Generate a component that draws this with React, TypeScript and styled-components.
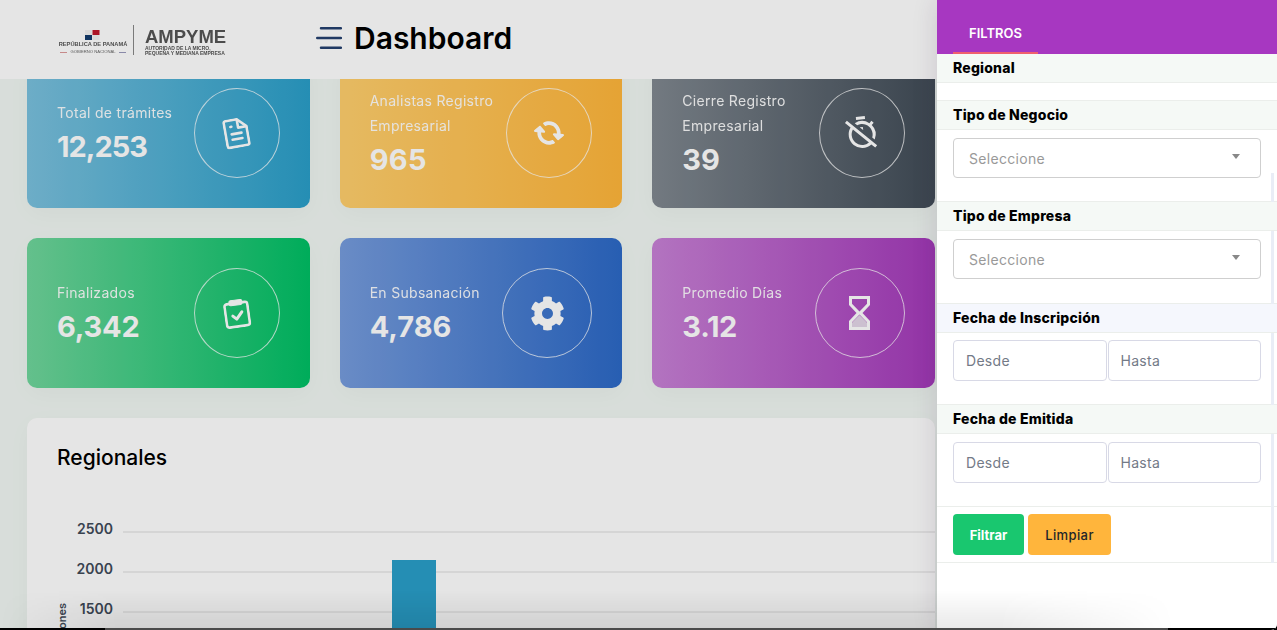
import React from "react";
import styled, { createGlobalStyle } from "styled-components";
import { FaCog, FaSyncAlt } from "react-icons/fa";
import { MdOutlineTimerOff } from "react-icons/md";

const Global = createGlobalStyle`
  html, body { margin: 0; padding: 0; height: 630px; overflow: hidden; background: #000; }
  * { box-sizing: border-box; }
  body { font-family: Inter, "Noto Sans", sans-serif; }
`;

const Page = styled.div`
  position: relative;
  width: 1277px;
  height: 630px;
  overflow: hidden;
  border-bottom-right-radius: 6px;
  background: #f1f7f3;
`;

const Header = styled.header`
  position: relative;
  z-index: 2;
  display: flex;
  align-items: center;
  height: 79px;
  padding: 0 0 3px 59px;
  background: #fff;
`;

const Logo = styled.div`
  flex: none;
  display: flex;
  align-items: center;
  width: 257px;
  margin-top: 3px;
  filter: blur(0.45px);
`;

const LogoLeft = styled.div`
  flex: none;
  display: flex;
  flex-direction: column;
  align-items: center;
  width: 68px;
  margin-top: 6px;
`;

const LogoState = styled.span`
  font: 700 5.7px/7px "Liberation Sans", sans-serif;
  color: #555;
  white-space: nowrap;
`;

const LogoGov = styled.span`
  display: flex;
  align-items: center;
  gap: 3px;
  margin-top: 1px;
  font: 400 4.2px/6px "Liberation Sans", sans-serif;
  color: #666;
  white-space: nowrap;
`;

const LogoDash = styled.i<{ $c: string }>`
  width: 7px;
  height: 1px;
  background: ${(p) => p.$c};
`;

const LogoDivider = styled.div`
  flex: none;
  width: 1px;
  height: 30px;
  margin: 0 11px 0 6px;
  background: #888;
`;

const LogoRight = styled.div`
  display: flex;
  flex-direction: column;
  align-items: flex-start;
  margin-top: 4px;
`;

const LogoName = styled.span`
  font: 700 18.5px/19px "Liberation Sans", sans-serif;
  color: #555;
`;

const LogoSub = styled.span`
  font: 700 5px/5.500px "Liberation Sans", sans-serif;
  color: #555;
  white-space: nowrap;
`;

const Burger = styled.svg`
  flex: none;
  width: 26px;
  height: 22px;
  margin-right: 12px;
  color: #24406f;
`;

const PageTitle = styled.h1`
  margin: 0;
  font: 600 30px/36px Inter, sans-serif;
  color: #000;
`;

const Content = styled.main`
  display: flex;
  flex-direction: column;
  gap: 30px;
  margin-top: -21px;
  padding: 0 342px 0 27px;
`;

const CardGrid = styled.section`
  display: grid;
  grid-template-columns: repeat(3, minmax(0, 1fr));
  grid-auto-rows: 150px;
  gap: 30px;
`;

const StatCard = styled.article<{ $from: string; $to: string }>`
  display: flex;
  align-items: center;
  justify-content: space-between;
  padding: 0 30px;
  border-radius: 10px;
  color: #fff;
  background: linear-gradient(90deg, ${(p) => p.$from}, ${(p) => p.$to});
  box-shadow: 0 6px 24px rgba(0, 0, 0, 0.03);
`;

const StatText = styled.div`
  min-width: 0;
  padding-top: 2px;
`;

const StatLabel = styled.div`
  max-width: 132px;
  font: 400 14px/25px Inter, sans-serif;
  letter-spacing: 0.3px;
  opacity: 0.95;
`;

const StatValue = styled.div<{ $ls: number }>`
  font: 700 29px/43px Inter, sans-serif;
  letter-spacing: ${(p) => p.$ls}px;
`;

const IconCircle = styled.div<{ $w: number }>`
  flex: none;
  display: flex;
  align-items: center;
  justify-content: center;
  width: ${(p) => p.$w}px;
  height: 90px;
  border: 1px solid rgba(255, 255, 255, 0.75);
  border-radius: 50%;
`;

const Tilted = styled.span<{ $deg: number }>`
  display: flex;
  transform: rotate(${(p) => p.$deg}deg);
`;

const ChartCard = styled.section`
  height: 300px;
  padding: 23px 30px;
  border-radius: 10px;
  background: #fff;
  box-shadow: 0 6px 24px rgba(0, 0, 0, 0.03);
`;

const ChartTitle = styled.h2`
  margin: 0 0 45px;
  font: 500 21px/34px Inter, sans-serif;
  color: #000;
`;

const ChartSvg = styled.svg`
  display: block;
  margin-left: -30px;
  width: 908px;
  height: 160px;
`;

const Dim = styled.div`
  position: absolute;
  inset: 0;
  z-index: 3;
  background: rgba(0, 0, 0, 0.1);
`;

const Panel = styled.aside`
  position: absolute;
  top: 0;
  right: 0;
  bottom: 0;
  z-index: 4;
  width: 340px;
  background: #fff;
  box-shadow: 0 0 24px rgba(60, 30, 70, 0.14);
`;

const PanelTabs = styled.div`
  display: flex;
  height: 54px;
  padding-left: 16px;
  background: #a737c1;
`;

const PanelTab = styled.div`
  width: 85px;
  padding-top: 24px;
  border-bottom: 2px solid #f0606e;
  text-align: center;
  font: 600 13px/18px Inter, sans-serif;
  color: #fff;
`;

const Heading = styled.div<{ $bg?: string }>`
  position: relative;
  z-index: 1;
  height: 29px;
  padding-left: 16px;
  border-bottom: 1px solid #ebeeeb;
  background: ${(p) => p.$bg ?? "#f5f9f6"};
  font: 800 14px/28px Inter, sans-serif;
  letter-spacing: 0.2px;
  color: #000;
`;

const Section = styled.div<{ $first?: boolean }>`
  position: relative;
  border-top: ${(p) => (p.$first ? "0" : "1px solid #ebeeeb")};
`;

const Body = styled.div<{ $h: number }>`
  height: ${(p) => p.$h}px;
  padding: 7.5px 16px 0;
`;

const FakeSelect = styled.div`
  display: flex;
  align-items: center;
  justify-content: space-between;
  height: 40px;
  padding: 2px 20px 0 15px;
  border: 1px solid #cfcfcf;
  border-radius: 4px;
  font: 400 14px/20px Inter, sans-serif;
  letter-spacing: 0.3px;
  color: #999;
`;

const Caret = styled.i`
  width: 0;
  height: 0;
  margin-bottom: 5px;
  border: 4px solid transparent;
  border-top: 5px solid #888;
  border-bottom: 0;
`;

const DateRow = styled.div`
  display: flex;
  gap: 1px;
`;

const DateInput = styled.input`
  flex: 1;
  min-width: 0;
  height: 41px;
  padding: 0 12px;
  border: 1px solid #d8d9e6;
  border-radius: 4px;
  outline: 0;
  font: 400 14px/20px Inter, sans-serif;
  letter-spacing: 0.3px;
  &::placeholder { color: #737a87; opacity: 1; }
`;

const Actions = styled.div`
  display: flex;
  gap: 4px;
  height: 57px;
  padding: 7px 16px 0;
  border-top: 1px solid #ebeeeb;
  border-bottom: 1px solid #ebeeeb;
`;

const ActionButton = styled.button<{ $bg: string; $fg: string; $w: number; $weight: number; $ls: number }>`
  width: ${(p) => p.$w}px;
  height: 41px;
  padding: 0;
  border: 0;
  border-radius: 4px;
  background: ${(p) => p.$bg};
  color: ${(p) => p.$fg};
  font: ${(p) => p.$weight} 13px/20px Inter, sans-serif;
  letter-spacing: ${(p) => p.$ls}px;
`;

const Scrollbar = styled.div`
  position: absolute;
  top: 173px;
  right: 3px;
  width: 3px;
  height: 390px;
  background: #e9edf6;
`;

const BottomShade = styled.div`
  position: absolute;
  left: 0;
  bottom: 0;
  z-index: 5;
  width: 1175px;
  height: 40px;
  background: linear-gradient(to top, rgba(0, 0, 0, 0.09), transparent);
  -webkit-mask-image: linear-gradient(to right, transparent, #000 10%, #000 85%, transparent);
  mask-image: linear-gradient(to right, transparent, #000 10%, #000 85%, transparent);
`;

const BottomEdge = styled.div`
  position: absolute;
  left: 0;
  right: 0;
  bottom: 0;
  z-index: 6;
  height: 2px;
  background: linear-gradient(to right, #000 105px, #4a4a4a 105px, #4a4a4a 1168px, #000 1168px);
`;

const DocIcon = () => (
  <Tilted $deg={-10}>
    <svg width="25" height="30" viewBox="0 0 25 30" fill="none" stroke="currentColor" strokeWidth="2.6" strokeLinejoin="round" strokeLinecap="round">
      <path d="M3.500 1.500h11.500l8.500 8.500v16.500a2 2 0 0 1-2 2h-18a2 2 0 0 1-2-2v-23a2 2 0 0 1 2-2z" />
      <path d="M15 2v8h8" />
      <path d="M7.500 15.500h10M7.500 21h10" />
      <path d="M7.500 8h1" />
    </svg>
  </Tilted>
);

const ClipboardIcon = () => (
  <Tilted $deg={-8}>
    <svg width="26" height="29" viewBox="0 0 26 29" fill="none" stroke="currentColor" strokeWidth="2.6" strokeLinejoin="round" strokeLinecap="round">
      <rect x="1.500" y="4" width="23" height="23.500" rx="2.500" />
      <rect x="6.500" y="1" width="13" height="5" rx="1.500" fill="currentColor" strokeWidth="1" />
      <path d="M8.500 16.500l3.500 3.500 6-6.500" strokeWidth="3" />
    </svg>
  </Tilted>
);

const HourglassIcon = () => (
  <svg width="21" height="34" viewBox="0 0 21 34">
    <path fill="#e4d6e8" d="M3 31h15v-4.500L10.500 19 3 26.500z" />
    <path fill="currentColor" fillRule="evenodd" d="M0 0h21v9l-7.500 8 7.500 8v9H0v-9l7.500-8L0 9zM3 3v4.800L10.500 15.500 18 7.800V3zM3 31h15v-4.800L10.500 18.500 3 26.200z" />
  </svg>
);

const cards = [
  { from: "#7ac1de", to: "#2a9fc9", label: "Total de trámites", value: "12,253", ls: -1, w: 86, icon: <DocIcon /> },
  { from: "#ffcf6d", to: "#ffb63b", label: "Analistas Registro Empresarial", value: "965", ls: 0.3, w: 86,
    icon: <Tilted $deg={50}><FaSyncAlt size={24} /></Tilted> },
  { from: "#808890", to: "#414c57", label: "Cierre Registro Empresarial", value: "39", ls: 0, w: 86,
    icon: <Tilted $deg={-6}><MdOutlineTimerOff size={36} /></Tilted> },
  { from: "#70d69c", to: "#00c065", label: "Finalizados", value: "6,342", ls: -0.2, w: 86, icon: <ClipboardIcon /> },
  { from: "#769cdd", to: "#2c69c7", label: "En Subsanación", value: "4,786", ls: 0, w: 90, icon: <FaCog size={35} /> },
  { from: "#c881d6", to: "#a43aba", label: "Promedio Días", value: "3.12", ls: -0.3, w: 90, icon: <HourglassIcon /> },
];

const ticks = [{ y: 12, t: "2500" }, { y: 52, t: "2000" }, { y: 92, t: "1500" }];

export default function App() {
  return (
    <Page>
      <Global />
      <Header>
        <Logo>
          <LogoLeft>
            <svg width="16" height="11" viewBox="0 0 16 11">
              <rect x="0" y="5" width="7" height="5" fill="#123a6b" />
              <rect x="7.500" y="0" width="7" height="5" fill="#c0172c" />
              <rect x="0" y="0" width="7" height="5" fill="#f2f2f2" />
              <rect x="7.500" y="5" width="7" height="5" fill="#f2f2f2" />
            </svg>
            <LogoState>REPÚBLICA DE PANAMÁ</LogoState>
            <LogoGov>
              <LogoDash $c="#d99" />GOBIERNO NACIONAL<LogoDash $c="#99b" />
            </LogoGov>
          </LogoLeft>
          <LogoDivider />
          <LogoRight>
            <LogoName>AMPYME</LogoName>
            <LogoSub>AUTORIDAD DE LA MICRO,</LogoSub>
            <LogoSub>PEQUEÑA Y MEDIANA EMPRESA</LogoSub>
          </LogoRight>
        </Logo>
        <Burger viewBox="0 0 26 22" fill="none" stroke="currentColor" strokeWidth="2.5" strokeLinecap="round">
          <path d="M5 1.250h20M1.250 11h23.750M5 20.750h20" />
        </Burger>
        <PageTitle>Dashboard</PageTitle>
      </Header>
      <Content>
        <CardGrid>
          {cards.map((c) => (
            <StatCard key={c.label} $from={c.from} $to={c.to}>
              <StatText>
                <StatLabel>{c.label}</StatLabel>
                <StatValue $ls={c.ls}>{c.value}</StatValue>
              </StatText>
              <IconCircle $w={c.w}>{c.icon}</IconCircle>
            </StatCard>
          ))}
        </CardGrid>
        <ChartCard>
          <ChartTitle>Regionales</ChartTitle>
          <ChartSvg viewBox="0 0 908 160">
            {ticks.map((t) => (
              <g key={t.t}>
                <rect x="96" y={t.y - 1} width="812" height="2" fill="#eeeeee" />
                <text x="86" y={t.y + 2} textAnchor="end" fontFamily="Inter, sans-serif" fontWeight="600" fontSize="14" fill="#3f4a58">{t.t}</text>
              </g>
            ))}
            <rect x="365" y="40" width="44" height="120" fill="#2a9fc9" />
            <text transform="translate(39 83) rotate(-90)" textAnchor="end" fontFamily="Inter, sans-serif" fontWeight="600" fontSize="11" fill="#3f4a58">Transacciones</text>
          </ChartSvg>
        </ChartCard>
      </Content>
      <Dim />
      <Panel>
        <PanelTabs><PanelTab>FILTROS</PanelTab></PanelTabs>
        <Section $first>
          <Heading>Regional</Heading>
          <Body $h={17} />
        </Section>
        <Section>
          <Heading>Tipo de Negocio</Heading>
          <Body $h={71}><FakeSelect>Seleccione<Caret /></FakeSelect></Body>
        </Section>
        <Section>
          <Heading>Tipo de Empresa</Heading>
          <Body $h={71.5}><FakeSelect>Seleccione<Caret /></FakeSelect></Body>
        </Section>
        <Section>
          <Heading $bg="#f5f7fd">Fecha de Inscripción</Heading>
          <Body $h={71.5}>
            <DateRow><DateInput placeholder="Desde" /><DateInput placeholder="Hasta" /></DateRow>
          </Body>
        </Section>
        <Section>
          <Heading>Fecha de Emitida</Heading>
          <Body $h={72}>
            <DateRow><DateInput placeholder="Desde" /><DateInput placeholder="Hasta" /></DateRow>
          </Body>
        </Section>
        <Actions>
          <ActionButton $bg="#19c76f" $fg="#fff" $w={71} $weight={700} $ls={0}>Filtrar</ActionButton>
          <ActionButton $bg="#ffb53c" $fg="#212529" $w={83} $weight={500} $ls={0.4}>Limpiar</ActionButton>
        </Actions>
        <Scrollbar />
      </Panel>
      <BottomShade />
      <BottomEdge />
    </Page>
  );
}
